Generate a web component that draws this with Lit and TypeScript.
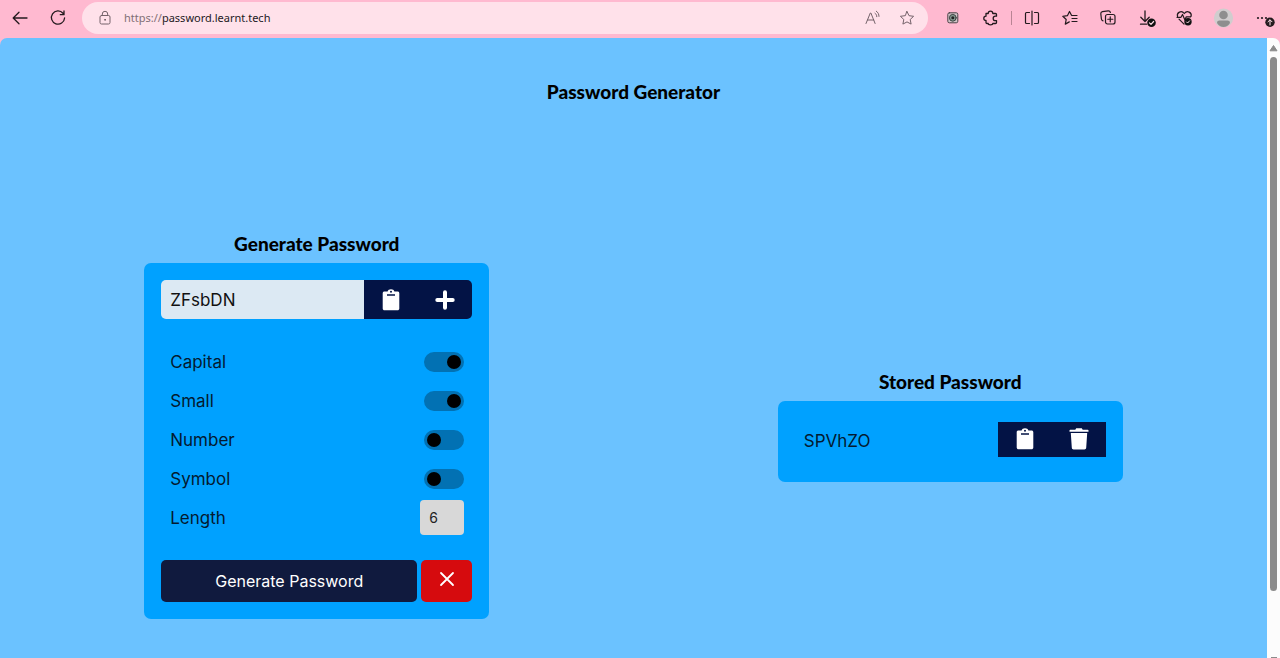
import { LitElement, html, css, svg } from "lit";
import { customElement, property, state } from "lit/decorators.js";

const clipboardIcon = html`<svg width="18" height="22" viewBox="0 0 18 22" aria-hidden="true">
  <path fill="#fff" fill-rule="evenodd" d="M2.500 2.500H5.600C6 1 7.200 .2 9 .2s3 .8 3.400 2.300h3.100c1 0 1.800.7 1.800 1.700V19.500c0 1-.8 1.800-1.800 1.800h-13C1.500 21.300.7 20.500.7 19.500V4.200c0-1 .8-1.700 1.800-1.700ZM9 1.800a1 1 0 1 0 0 2 1 1 0 0 0 0-2ZM5 5.200v1.600h8V5.200Z"/>
</svg>`;
const plusIcon = html`<svg width="20" height="20" viewBox="0 0 20 20" aria-hidden="true">
  <path d="M10 2.300v15.400M2.300 10h15.400" stroke="#fff" stroke-width="4" stroke-linecap="round"/>
</svg>`;
const trashIcon = html`<svg width="20" height="22" viewBox="0 0 20 22" aria-hidden="true">
  <path fill="#fff" d="M1.300 1.700h5L7.200.3h5.600l.9 1.400h5c.6 0 .8.4.8.9v1.200H.5V2.600c0-.5.2-.9.8-.9ZM1.800 5h16.400l-1 14.800c-.1 1-.8 1.700-1.800 1.700H4.600c-1 0-1.700-.7-1.800-1.700Z"/>
</svg>`;
const crossIcon = html`<svg width="16" height="16" viewBox="0 0 16 16" aria-hidden="true">
  <path d="M2 2l12 12M14 2L2 14" stroke="#fff" stroke-width="1.800" stroke-linecap="round"/>
</svg>`;

const barIcons = {
  back: svg`<path stroke-width="1.300" d="M18 11H5M10 5.200L4.200 11l5.800 5.800"/>`,
  reload: svg`<path stroke-width="1.300" d="M16 6.200A6.600 6.600 0 1 0 17.600 11M17 4v3.700h-3.700"/>`,
  lock: svg`<rect x="6" y="8.500" width="10" height="8.500" rx="1.500"/><path d="M8.300 8.500V7a2.700 2.700 0 0 1 5.400 0v1.500"/><circle cx="11" cy="12.800" r=".5" fill="currentColor"/>`,
  read: svg`<path d="M4 16.500L8.300 6h.6l4.200 10.500M5.400 13h6.400M13 6.200c1.200.8 1.800 2 1.800 3.500M14.300 4.200c1.800 1.200 2.700 3 2.700 5.200"/>`,
  star: svg`<path d="M11 4.500l2 4.200 4.600.6-3.400 3.200.9 4.600L11 14.900l-4.100 2.200.9-4.600L4.400 9.300 9 8.700Z"/>`,
  target: svg`<rect x="5.800" y="5.800" width="10" height="10" rx="1.500" fill="#d3c3c9" stroke="#4a4145"/><circle cx="10.800" cy="10.800" r="3.400" fill="#84968f" stroke="#3c4441"/><circle cx="10.800" cy="10.800" r="1.500" fill="#222" stroke="none"/>`,
  puzzle: svg`<path stroke-width="1.300" d="M6 6.500h2.200C8.200 5 9.200 4.200 10.500 4.200s2.300.8 2.300 2.300h2.700c.6 0 1 .4 1 1v1.700h-1.100a2.200 2.200 0 0 0 0 4.400h1.100v1.900c0 .6-.4 1-1 1h-2.700c0 .8-.9 1.300-2.300 1.300s-2.300-.5-2.300-1.300H7c-.6 0-1-.4-1-1v-2c-1.300 0-2.200-.8-2.200-2.100S4.700 9.200 6 9.200Z"/>`,
  split: svg`<path stroke-width="1.200" d="M7.500 5.500H4.500c-.7 0-1 .4-1 1v9c0 .6.300 1 1 1h3M12.500 5.500h3c.7 0 1 .4 1 1v9c0 .6-.3 1-1 1h-3M10 4v14"/>`,
  favourites: svg`<path stroke-width="1.200" d="M11.500 8.300L9.500 4.500 7.400 8.700l-4.600.6 3.400 3.200-.9 4.600 4-2.200M12 8.500H17M12 11.500H17M12 14.500H17"/>`,
  collections: svg`<rect x="7.500" y="7.500" width="9.500" height="9.500" rx="2" stroke-width="1.200"/><path stroke-width="1.200" d="M12.250 9.800v5M9.800 12.250h5M5 13.800C4 13.600 3.500 13 3.400 12L2.800 6.800c-.1-1.300.5-2 1.600-2.200l5.800-.8c1.200-.1 1.900.5 2.200 1.700"/>`,
  download: svg`<path stroke-width="1.300" d="M9 4v10.300M4.800 10.300L9 14.500l4.200-4.200M4.500 17.200h6"/><circle cx="15.500" cy="15.800" r="4.300" fill="#111" stroke="none"/><path d="M13.500 15.900l1.500 1.500 2.600-2.900" stroke="#ffe1ea" stroke-width="1.200"/>`,
  health: svg`<path stroke-width="1.200" d="M10 17.200L5 12.200M3.500 9.300c-1-3.800 4-6.500 6.800-2.800 2.800-3.700 7.800-1 6.800 2.800M3 10.300h4L8.500 7.500l2.300 5.300 1.500-2.900h4.200"/><circle cx="14" cy="14.800" r="3.700" fill="#111" stroke="none"/><path d="M12.600 15l1 1 2-2.200" stroke="#ffe1ea"/>`,
  more: svg`<g fill="currentColor" stroke="none"><circle cx="8" cy="11" r="1.100"/><circle cx="12" cy="11" r="1.100"/><circle cx="16" cy="11" r="1.100"/><circle cx="20" cy="15.300" r="4.700"/></g><path d="M20 18v-5M18 14.800l2-2 2 2" stroke="#ffe1ea"/>`,
  profile: svg`<g stroke="none"><circle cx="11.500" cy="11" r="9.600" fill="#d0cdce"/><circle cx="11.500" cy="8" r="4.300" fill="#8e8e8e"/><path d="M5 16c0-1.700 1-2.500 2.500-2.500h8c1.500 0 2.500.8 2.500 2.500-1.500 2.800-4 4-6.500 4S6.500 18.800 5 16Z" fill="#8e8e8e"/></g>`,
};

type BarIcon = keyof typeof barIcons;

@customElement("browser-bar")
class BrowserBar extends LitElement {
  static styles = css`
    :host {
      display: flex;
      align-items: center;
      height: 38px;
      padding: 0 0 2px 1px;
      box-sizing: border-box;
      background: #ffb9d0;
      color: #241a1e;
    }
    .tool {
      width: 38px;
      height: 32px;
      padding: 0;
      border: 0;
      background: none;
      color: inherit;
      display: grid;
      place-items: center;
      flex: none;
    }
    .address {
      flex: 1;
      min-width: 0;
      display: flex;
      align-items: center;
      height: 32px;
      margin: 0 6px 0 5px;
      padding: 0 4px 0 3px;
      border-radius: 16px;
      background: #ffe1ea;
      box-sizing: border-box;
      color: #74636a;
    }
    .url {
      flex: 1;
      min-width: 0;
      font: 11px/16px "Noto Sans", "Open Sans", sans-serif;
      white-space: nowrap;
      overflow: hidden;
      color: #816f76;
      text-decoration: none;
    }
    .host {
      color: #241a1e;
    }
    .address .tool {
      width: 34px;
    }
    .address .tool.lock {
      width: 39px;
    }
    .divider {
      width: 1px;
      height: 14px;
      margin: 0 2px 0 1px;
      background: #b98494;
    }
    svg {
      display: block;
    }
  `;

  private tool(name: BarIcon, label: string, extra = "") {
    return html`<button class="tool ${extra}" aria-label=${label}>
      <svg width="22" height="22" viewBox="0 0 22 22" fill="none" stroke="currentColor" stroke-linecap="round" stroke-linejoin="round" overflow="visible">
        ${barIcons[name]}
      </svg>
    </button>`;
  }

  render() {
    return html`
      ${this.tool("back", "Back")} ${this.tool("reload", "Refresh")}
      <div class="address">
        ${this.tool("lock", "Site information", "lock")}
        <a class="url" href="#">https://<span class="host">password.learnt.tech</span></a>
        ${this.tool("read", "Read aloud")} ${this.tool("star", "Add to favourites")}
      </div>
      ${this.tool("target", "Screen capture")} ${this.tool("puzzle", "Extensions")}
      <span class="divider"></span>
      ${this.tool("split", "Split screen")} ${this.tool("favourites", "Favourites")}
      ${this.tool("collections", "Collections")} ${this.tool("download", "Downloads")}
      ${this.tool("health", "Browser essentials")} ${this.tool("profile", "Profile")}
      ${this.tool("more", "More")}
    `;
  }
}

@customElement("password-page")
class PasswordPage extends LitElement {
  @property() password = "ZFsbDN";
  @state() private stored = ["SPVhZO"];
  private options = [
    { id: "capital", label: "Capital", on: true },
    { id: "small", label: "Small", on: true },
    { id: "number", label: "Number", on: false },
    { id: "symbol", label: "Symbol", on: false },
  ];

  static styles = css`
    :host {
      display: block;
      background: #6bc2ff;
      color: #000;
      font: 17px/24px Inter, sans-serif;
      overflow: hidden;
    }
    * {
      box-sizing: border-box;
    }
    h1,
    h2 {
      margin: 0;
      font: 900 19px/24px "Gill Sans", "Gill Sans MT", Lato, sans-serif;
      text-align: center;
    }
    h1 {
      padding-top: 42px;
    }
    h2 {
      margin-bottom: 7px;
    }
    .columns {
      display: grid;
      grid-template-columns: 1fr 1fr;
      align-items: center;
      justify-items: center;
      padding: 128px 0 38px;
    }
    .panel {
      width: 345px;
      max-width: 100%;
    }
    .card {
      padding: 17px;
      border-radius: 7px;
      background: #00a1ff;
    }
    button {
      display: grid;
      place-items: center;
      padding: 0;
      border: 0;
      color: #fff;
      font: inherit;
    }
    .result {
      display: flex;
      height: 39px;
      border-radius: 5px;
      overflow: hidden;
    }
    .result input {
      flex: 1;
      min-width: 0;
      padding: 0 9px;
      border: 0;
      background: #dce9f3;
      color: #111;
      font: inherit;
    }
    .action {
      width: 54px;
      background: #031345;
    }
    .options {
      padding: 23px 8px 23px 9px;
      color: #041a30;
    }
    .option {
      display: flex;
      align-items: center;
      justify-content: space-between;
      height: 39px;
    }
    .switch {
      appearance: none;
      display: flex;
      align-items: center;
      width: 40px;
      height: 20px;
      margin: 0;
      padding: 0 3px;
      border-radius: 10px;
      background: #0271b3;
    }
    .switch::before {
      content: "";
      width: 14px;
      height: 14px;
      border-radius: 50%;
      background: #000;
    }
    .switch:checked {
      justify-content: flex-end;
    }
    .length {
      width: 44px;
      height: 35px;
      padding: 0 9px;
      border: 0;
      border-radius: 4px;
      background: #d8d8d8;
      color: #222;
      font: 14px Inter, sans-serif;
    }
    .buttons {
      display: flex;
      gap: 4px;
      height: 42px;
    }
    .generate {
      flex: 1;
      border-radius: 5px;
      background: #101a3e;
      font-size: 16px;
    }
    .clear {
      width: 51px;
      padding-bottom: 4px;
      border-radius: 5px;
      background: #d60b0e;
    }
    .stored {
      display: flex;
      align-items: center;
      padding: 21px 17px 25px 26px;
      color: #041a30;
    }
    .stored .name {
      flex: 1;
      padding-top: 4px;
    }
    .stored .action {
      height: 35px;
    }
  `;

  render() {
    return html`
      <h1>Password Generator</h1>
      <div class="columns">
        <section class="panel">
          <h2>Generate Password</h2>
          <div class="card">
            <div class="result">
              <input aria-label="Generated password" .value=${this.password} readonly />
              <button class="action" aria-label="Copy">${clipboardIcon}</button>
              <button class="action" aria-label="Store">${plusIcon}</button>
            </div>
            <div class="options">
              ${this.options.map(
                (o) => html`<div class="option">
                  <label for=${o.id}>${o.label}</label>
                  <input class="switch" type="checkbox" id=${o.id} ?checked=${o.on} />
                </div>`
              )}
              <div class="option">
                <label for="length">Length</label>
                <input class="length" id="length" inputmode="numeric" value="6" />
              </div>
            </div>
            <div class="buttons">
              <button class="generate">Generate Password</button>
              <button class="clear" aria-label="Clear">${crossIcon}</button>
            </div>
          </div>
        </section>
        <section class="panel">
          <h2>Stored Password</h2>
          ${this.stored.map(
            (p) => html`<div class="card stored">
              <span class="name">${p}</span>
              <button class="action" aria-label="Copy">${clipboardIcon}</button>
              <button class="action" aria-label="Delete">${trashIcon}</button>
            </div>`
          )}
        </section>
      </div>
    `;
  }
}

@customElement("app-root")
class AppRoot extends LitElement {
  static styles = css`
    :host {
      display: flex;
      flex-direction: column;
      height: 100vh;
      overflow: hidden;
      background: #ffb9d0;
    }
    browser-bar {
      flex: none;
    }
    .view {
      flex: 1;
      min-height: 0;
      display: flex;
      border-radius: 7px 7px 0 0;
      overflow: hidden;
    }
    password-page {
      flex: 1;
      min-width: 0;
    }
    .scrollbar {
      width: 13px;
      display: flex;
      flex-direction: column;
      align-items: center;
      padding-top: 6px;
      box-sizing: border-box;
      background: #fcfcfc;
    }
    .arrow {
      flex: none;
      display: block;
    }
    .track {
      flex: 1;
      width: 7px;
      margin: 5px 0 0;
    }
    .thumb {
      height: 89%;
      border-radius: 4px;
      background: #8b8b8b;
    }
    .end {
      width: 6px;
      height: 1px;
      background: #8b8b8b;
    }
  `;

  render() {
    return html`
      <browser-bar></browser-bar>
      <div class="view">
        <password-page></password-page>
        <div class="scrollbar" aria-hidden="true">
          <svg class="arrow" width="9" height="8" viewBox="0 0 9 8">
            <path d="M4.500 1.500L8 6.800H1Z" fill="#8b8b8b" stroke="#8b8b8b" stroke-linejoin="round" />
          </svg>
          <div class="track"><div class="thumb"></div></div>
          <div class="end"></div>
        </div>
      </div>
    `;
  }
}
